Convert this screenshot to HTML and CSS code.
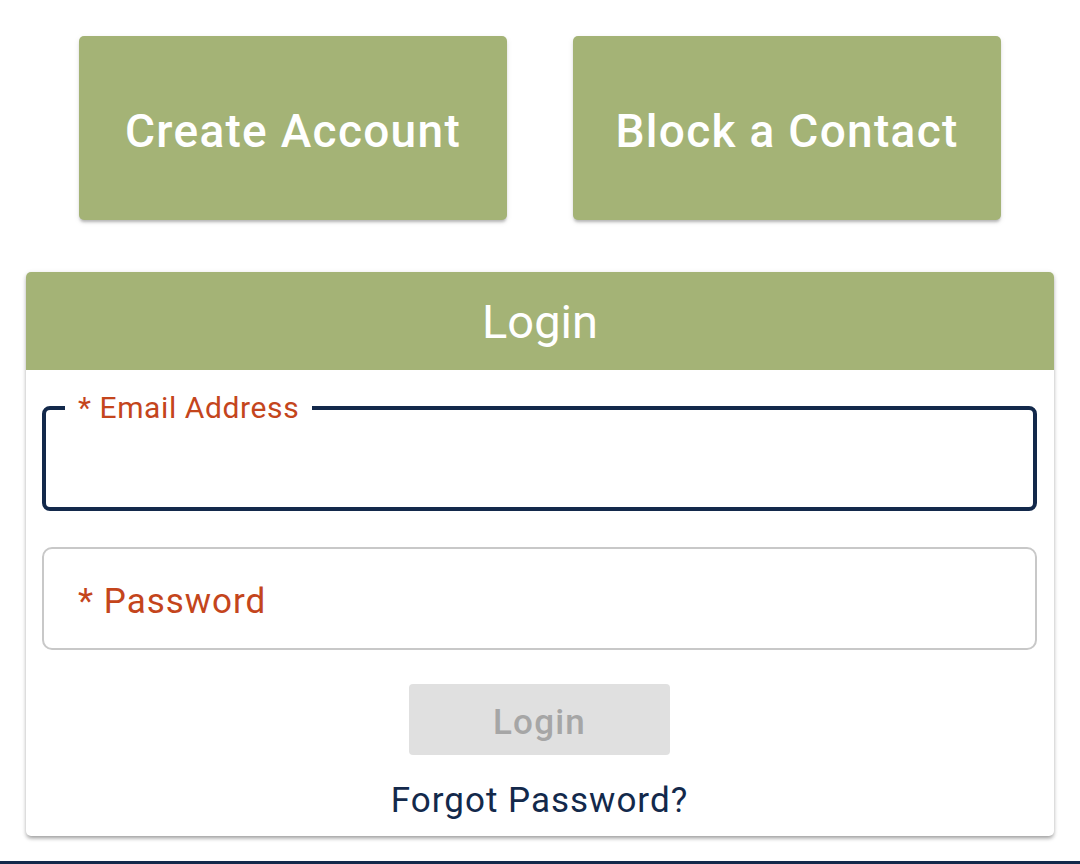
FILE: index.html
```html
<!DOCTYPE html>
<html>
<head>
<meta charset="utf-8">
<link rel="stylesheet" href="styles.css">
</head>
<body>
<div class="page">
  <div class="actions">
    <button class="action">Create Account</button>
    <button class="action">Block a Contact</button>
  </div>
  <div class="card">
    <div class="card-header">Login</div>
    <div class="card-body">
      <fieldset class="field field-active">
        <legend class="legend">* Email Address</legend>
        <div class="field-inner"></div>
      </fieldset>
      <div class="field field-idle">
        <span class="placeholder">* Password</span>
      </div>
      <button class="login-btn" disabled>Login</button>
      <a class="forgot">Forgot Password?</a>
    </div>
  </div>
</div>
<div class="bottom-bar"></div>
</body>
</html>
```
FILE: styles.css
```css
html, body {
  margin: 0;
  padding: 0;
  background: #ffffff;
  font-family: Roboto, "Liberation Sans", Arial, sans-serif;
}
.page {
  height: 861px;
  padding: 36px 26px 0 26px;
  box-sizing: border-box;
}
.actions {
  display: flex;
  justify-content: center;
  gap: 66px;
}
.action {
  width: 428px;
  height: 184px;
  background: #a4b376;
  color: #ffffff;
  border: none;
  border-radius: 5px;
  font-family: Roboto, "Liberation Sans", Arial, sans-serif;
  font-weight: 500;
  font-size: 46px;
  letter-spacing: 1.3px;
  box-shadow: 0 3px 3px -1px rgba(0,0,0,0.25), 0 2px 6px rgba(0,0,0,0.08);
  padding: 6px 0 0 0;
}
.card {
  margin-top: 52px;
  width: 1028px;
  border-radius: 5px;
  background: #fff;
  box-shadow: 0 3px 4px -1px rgba(0,0,0,0.35), 0 1px 5px rgba(0,0,0,0.12);
  overflow: hidden;
}
.card-header {
  height: 98px;
  background: #a4b376;
  color: #fff;
  font-size: 47px;
  display: flex;
  align-items: center;
  justify-content: center;
}
.card-body {
  padding: 22px 17px 0 16px;
  display: flex;
  flex-direction: column;
  align-items: center;
  height: 466px;
  box-sizing: border-box;
}
.field {
  width: 100%;
  box-sizing: border-box;
  margin: 0;
}
.field-active {
  border: 4px solid #13294b;
  border-radius: 8px;
  padding: 0 0 0 19px;
  height: 119px;
  min-width: 0;
}
.legend {
  color: #c4451c;
  font-size: 30px;
  letter-spacing: 0.6px;
  line-height: 32px;
  padding: 0 13px;
  margin: 0;
}
.field-idle {
  margin-top: 36px;
  height: 103px;
  border: 2px solid #c8c8c8;
  border-radius: 10px;
  display: flex;
  align-items: center;
  padding: 5px 0 0 34px;
}
.placeholder {
  color: #c4451c;
  font-size: 35px;
  letter-spacing: 1px;
}
.login-btn {
  margin-top: 34px;
  width: 261px;
  height: 71px;
  border: none;
  border-radius: 4px;
  background: #e0e0e0;
  color: #a6a6a6;
  font-family: Roboto, "Liberation Sans", Arial, sans-serif;
  font-weight: 500;
  font-size: 35px;
  letter-spacing: 1.2px;
  padding: 6px 0 0 0;
}
.forgot {
  margin-top: 24px;
  color: #13294b;
  font-size: 35px;
  letter-spacing: 1px;
  line-height: 44px;
}
.bottom-bar {
  height: 3px;
  background: #13294b;
}
```
